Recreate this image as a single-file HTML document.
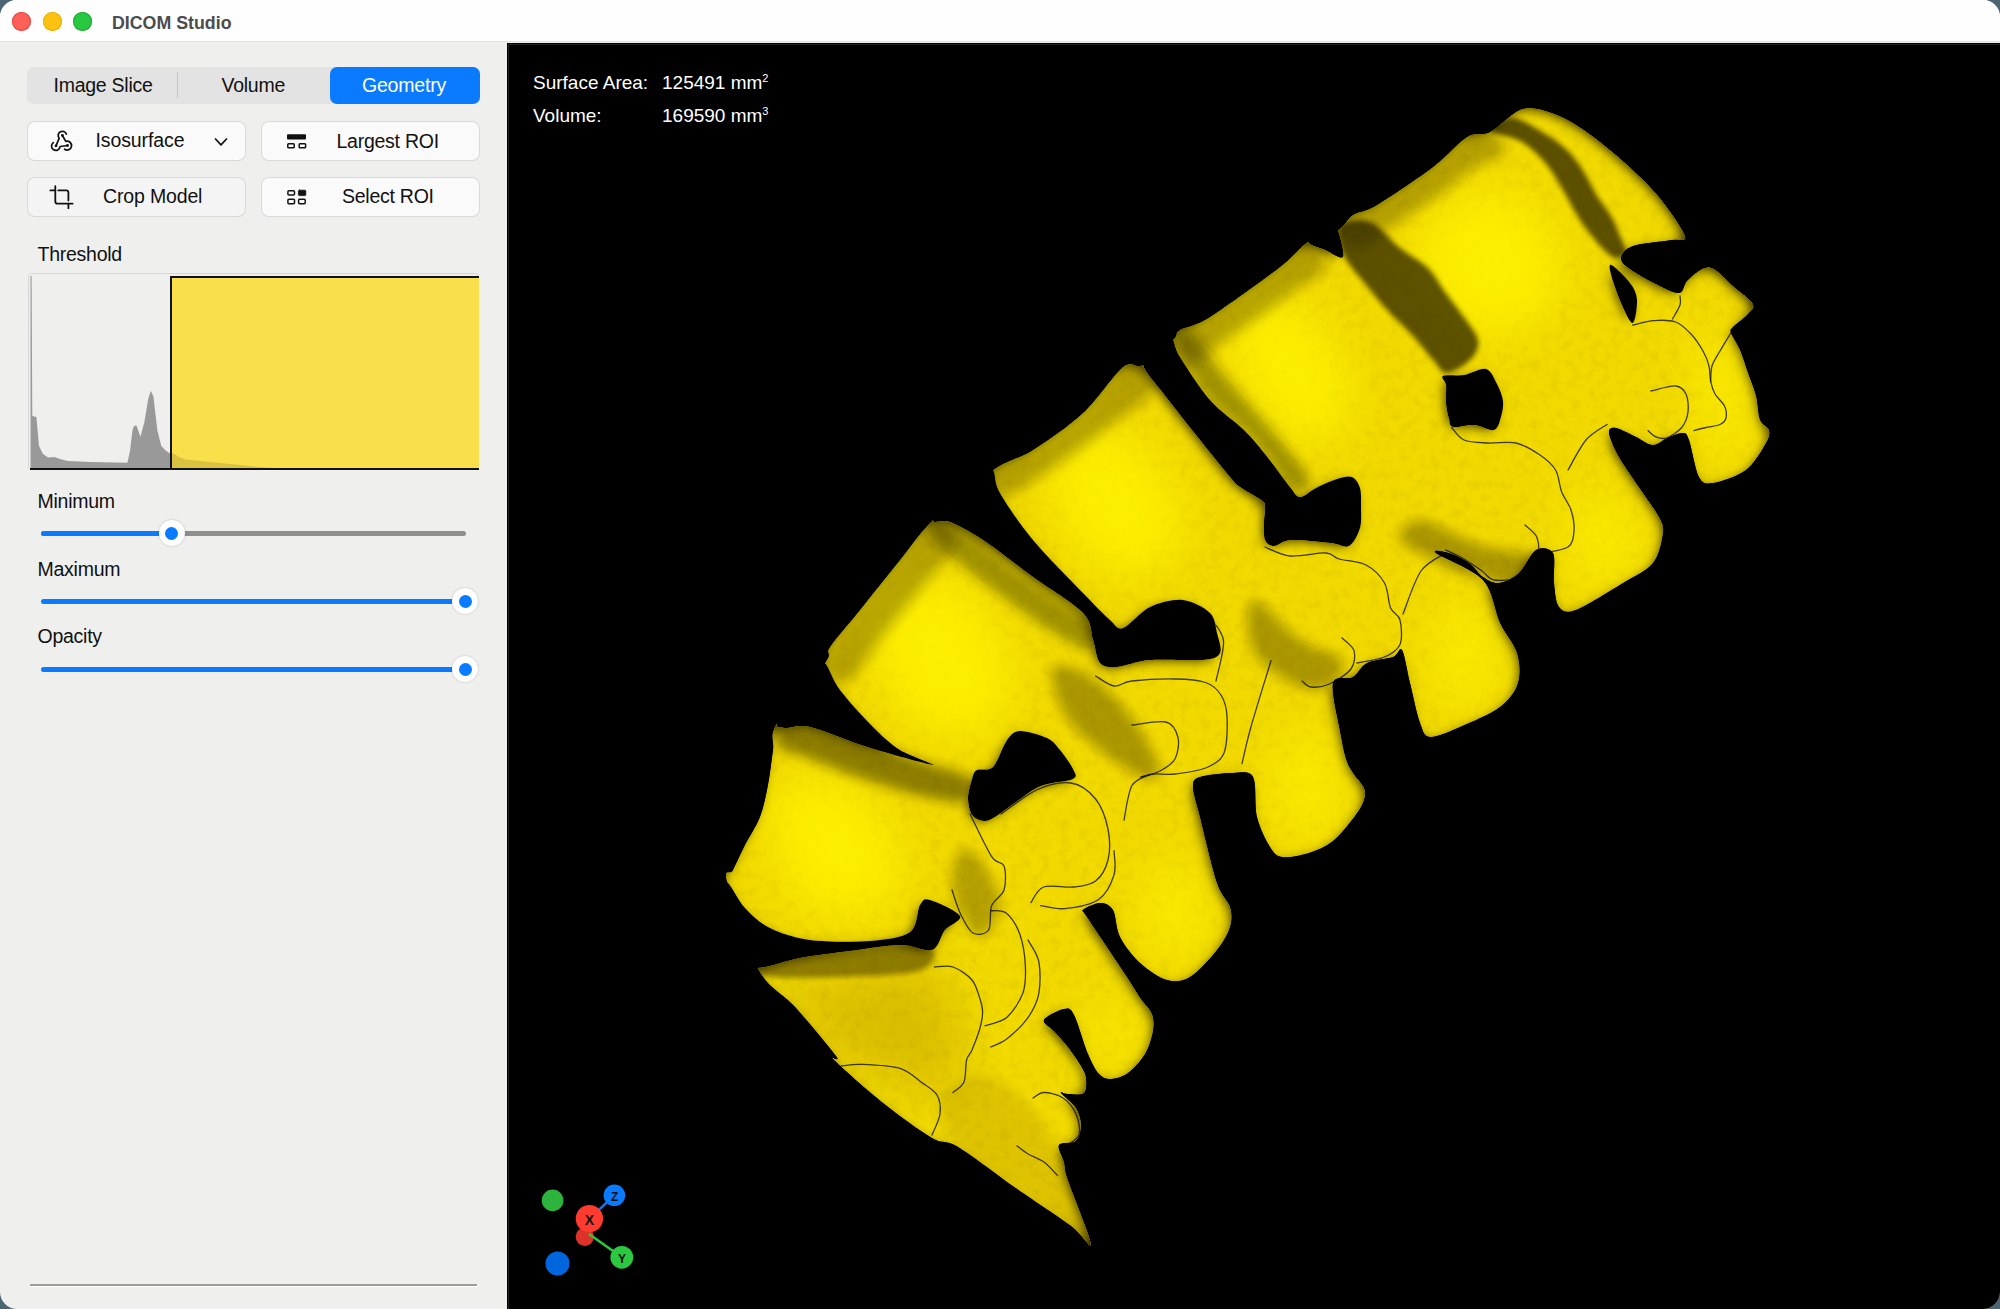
<!DOCTYPE html>
<html><head><meta charset="utf-8">
<style>
html,body{margin:0;padding:0;}
body{width:2000px;height:1309px;overflow:hidden;background:#4b6670;font-family:"Liberation Sans", sans-serif;position:relative;}
.win{position:absolute;left:0;top:0;width:2000px;height:1309px;border-radius:17px;overflow:hidden;background:#efefee;}
.tb{position:absolute;left:0;top:0;width:2000px;height:42px;background:#fefefe;border-bottom:1px solid #e2e2e2;box-sizing:border-box;}
.dot{position:absolute;top:12px;width:19px;height:19px;border-radius:50%;}
.t{position:absolute;white-space:nowrap;line-height:1;color:#111;}
.seg{position:absolute;left:27px;top:67px;width:453px;height:37px;border-radius:7px;background:#e3e3e3;}
.btn{position:absolute;width:217px;height:38px;border-radius:7px;background:#fafafa;box-shadow:0 0 0 1px #dadada, 0 1px 1px rgba(0,0,0,0.08);}
.vp{position:absolute;left:507px;top:43px;width:1493px;height:1266px;background:#000;}
</style></head><body>
<div class="win">
 <div class="tb">
  <div class="dot" style="left:12px;background:#fe5f57;box-shadow:inset 0 0 0 1px #e5483f"></div>
  <div class="dot" style="left:42.5px;background:#fdc20f;box-shadow:inset 0 0 0 1px #e8b00a"></div>
  <div class="dot" style="left:73px;background:#28c840;box-shadow:inset 0 0 0 1px #1fa934"></div>
  <div class="t" style="left:112px;top:15px;font-size:17.8px;font-weight:bold;color:#4c4c4c">DICOM Studio</div>
 </div>
 <div class="seg"></div>
 <div style="position:absolute;left:177px;top:72px;width:1px;height:26px;background:#c4c4c4"></div>
 <div style="position:absolute;left:329.5px;top:67px;width:150.5px;height:37px;border-radius:7px;background:#0a7aff"></div>
 <div class="t" style="left:53.5px;top:75.5px;font-size:19.5px;letter-spacing:-0.25px">Image Slice</div>
 <div class="t" style="left:221.5px;top:75.5px;font-size:19.5px;letter-spacing:-0.25px">Volume</div>
 <div class="t" style="left:362px;top:75.5px;font-size:19.5px;letter-spacing:-0.2px;color:#fff">Geometry</div>

 <div class="btn" style="left:27.5px;top:122px"></div>
 <div class="btn" style="left:262px;top:122px"></div>
 <div class="btn" style="left:27.5px;top:178px;background:#f4f4f4"></div>
 <div class="btn" style="left:262px;top:178px"></div>
 <div class="t" style="left:95.5px;top:131.3px;font-size:19.5px;letter-spacing:-0.1px">Isosurface</div>
 <div class="t" style="left:336.5px;top:131.6px;font-size:19.5px;letter-spacing:-0.25px">Largest ROI</div>
 <div class="t" style="left:103px;top:187.3px;font-size:19.5px;letter-spacing:-0.15px">Crop Model</div>
 <div class="t" style="left:342px;top:187.3px;font-size:19.5px;letter-spacing:-0.25px">Select ROI</div>


 <svg style="position:absolute;left:0;top:0" width="100" height="170" viewBox="0 0 100 170" fill="none" stroke="#111" stroke-width="1.75" stroke-linecap="round" stroke-linejoin="round">
  <path d="M66.35,134.06 A4.2,4.2 0 1 0 59.2,138.2 L56,145.8"/>
  <path d="M62.4,135.5 L65.8,141.4 A4.4,4.4 0 1 1 64.6,149.2"/>
  <path d="M53.3,142.6 A4.3,4.3 0 1 0 60.1,146.5 L67.5,145.5"/>
  <circle cx="62.4" cy="135.5" r="1.4" fill="#111" stroke="none"/><circle cx="56" cy="145.8" r="1.4" fill="#111" stroke="none"/><circle cx="67.5" cy="145.5" r="1.4" fill="#111" stroke="none"/>
 </svg>
 <svg style="position:absolute;left:0;top:0" width="500" height="230" viewBox="0 0 500 230" fill="none" stroke="#111" stroke-linecap="round" stroke-linejoin="round">
  <path d="M215.5 139 L221 144.8 L226.5 139" stroke-width="1.7"/>
  <rect x="287" y="134.3" width="19" height="5.2" rx="1" fill="#111" stroke="none"/>
  <rect x="287.8" y="143.8" width="6.4" height="4" rx="0.8" stroke-width="1.5"/>
  <rect x="299.2" y="143.8" width="6.4" height="4" rx="0.8" stroke-width="1.5"/>
  <rect x="287.9" y="190.7" width="6.6" height="4.4" rx="1" stroke-width="1.5"/>
  <rect x="298.4" y="190.2" width="7.4" height="5.4" rx="1" fill="#111" stroke-width="0.8"/>
  <rect x="287.9" y="199.3" width="6.6" height="4.4" rx="1" stroke-width="1.5"/>
  <rect x="298.6" y="199.3" width="6.6" height="4.4" rx="1" stroke-width="1.5"/>
  <path d="M55.3 186.2 V201.5 Q55.3 203.7 57.5 203.7 H72.6" stroke-width="1.8"/>
  <path d="M50.4 190.4 H55.3" stroke-width="1.8"/>
  <path d="M58.3 190.4 H66.3 Q68.4 190.4 68.4 192.5 V200.4" stroke-width="1.8"/>
  <path d="M68.4 203.7 V208.2" stroke-width="1.8"/>
 </svg>
 <div class="t" style="left:37.5px;top:244.5px;font-size:19.5px;letter-spacing:-0.25px">Threshold</div>
 <div class="t" style="left:37.5px;top:492px;font-size:19.5px;letter-spacing:-0.25px">Minimum</div>
 <div class="t" style="left:37.5px;top:559.8px;font-size:19.5px;letter-spacing:-0.25px">Maximum</div>
 <div class="t" style="left:37.5px;top:627px;font-size:19.5px;letter-spacing:-0.25px">Opacity</div>

 <div style="position:absolute;left:28px;top:273px;width:451px;height:197px;border:1px solid #d6d6d6;border-radius:4px;box-sizing:border-box;background:#efefee"></div>
 <div style="position:absolute;left:170px;top:276px;width:309px;height:193px;background:#f9df4a;border-left:2px solid #111;border-top:2px solid #111;box-sizing:border-box"></div>

 <svg style="position:absolute;left:0;top:0" width="500" height="480" viewBox="0 0 500 480">
  <path d="M30.5 469 L30.5 276 L31.6 276 L32.3 416 L36.4 417 L39 446 L43 454 L48 457.5 L54.6 457 L60 459 L67.6 461 L90 462 L127.4 462.7 L130 451 L132.5 430 L134 426 L136.5 425.5 L140.4 436.7 L144.3 422.4 L148.2 399 L150.8 390.7 L153.4 396.4 L157.3 430 L161.2 445.8 L165 450 L170 453.6 L170 469 Z" fill="#999"/>
  <path d="M172 469 L172 453 L176 455 L179 457 L186 459.5 L200 461 L230 464 L260 467 L290 469 Z" fill="#000" fill-opacity="0.13"/>
 </svg>
 <div style="position:absolute;left:30px;top:468px;width:449px;height:2px;background:#111"></div>

 <div style="position:absolute;left:41px;top:530.5px;width:425px;height:5px;border-radius:3px;background:#8e8e8e"></div>
 <div style="position:absolute;left:41px;top:530.5px;width:131px;height:5px;border-radius:3px;background:#0a7aff"></div>
 <div style="position:absolute;left:41px;top:598.5px;width:425px;height:5px;border-radius:3px;background:#0a7aff"></div>
 <div style="position:absolute;left:41px;top:666.5px;width:425px;height:5px;border-radius:3px;background:#0a7aff"></div>
 <div style="position:absolute;left:158.5px;top:520px;width:26px;height:26px;border-radius:50%;background:#fff;box-shadow:0 0 2px rgba(0,0,0,.25)"></div>
 <div style="position:absolute;left:165px;top:526.5px;width:13px;height:13px;border-radius:50%;background:#0a7aff"></div>
 <div style="position:absolute;left:452px;top:588px;width:26px;height:26px;border-radius:50%;background:#fff;box-shadow:0 0 2px rgba(0,0,0,.25)"></div>
 <div style="position:absolute;left:458.5px;top:594.5px;width:13px;height:13px;border-radius:50%;background:#0a7aff"></div>
 <div style="position:absolute;left:452px;top:656px;width:26px;height:26px;border-radius:50%;background:#fff;box-shadow:0 0 2px rgba(0,0,0,.25)"></div>
 <div style="position:absolute;left:458.5px;top:662.5px;width:13px;height:13px;border-radius:50%;background:#0a7aff"></div>

 <div style="position:absolute;left:30px;top:1284px;width:447px;height:2px;background:#9c9c9c;box-shadow:0 1px 0 #fff"></div>

 <div class="vp"><div style="position:absolute;left:1px;top:1px;right:0;bottom:0;border-left:1px solid #232323;border-top:1px solid #232323"></div></div>
 <svg style="position:absolute;left:0;top:0" width="2000" height="1309" viewBox="0 0 2000 1309">
<defs>
<mask id="hm" maskUnits="userSpaceOnUse" x="0" y="0" width="2000" height="1309"><rect x="0" y="0" width="2000" height="1309" fill="#000"/>
<path d="M1091.0,1244.0 C1091.5,1251.4 1082.8,1234.8 1071.0,1226.0 C1059.2,1217.2 1035.1,1201.6 1017.0,1189.0 C998.9,1176.4 971.6,1155.2 958.0,1147.0 C944.4,1138.8 944.0,1145.0 932.0,1138.0 C920.0,1131.0 898.7,1115.5 883.0,1103.0 C867.3,1090.5 841.5,1067.5 834.0,1060.0 C826.5,1052.5 842.2,1064.5 836.0,1056.0 C829.8,1047.5 807.5,1020.9 795.0,1007.0 C782.5,993.1 768.9,989.0 758.0,969.0 C747.1,949.0 731.0,897.8 727.0,882.0 C723.0,866.2 730.1,875.9 733.0,870.0 C735.9,864.1 740.7,853.5 745.0,845.0 C749.3,836.5 756.3,826.6 760.0,817.0 C763.7,807.4 765.9,795.7 768.0,785.0 C770.1,774.3 771.6,759.9 773.0,750.0 C774.4,740.1 768.7,736.9 777.0,723.0 C785.3,709.1 816.5,675.2 825.0,663.0 C833.5,650.8 824.4,655.5 830.0,647.0 C835.6,638.5 848.8,623.9 860.0,610.0 C871.2,596.1 888.3,574.4 900.0,560.0 C911.7,545.6 918.1,534.4 933.0,520.0 C947.9,505.6 977.0,481.2 993.0,470.0 C1009.0,458.8 1018.6,459.1 1033.0,450.0 C1047.4,440.9 1068.6,426.3 1083.0,413.0 C1097.4,399.7 1113.4,374.7 1123.0,367.0 C1132.6,359.3 1135.0,369.3 1143.0,365.0 C1151.0,360.7 1167.1,345.6 1173.0,340.0 C1178.9,334.4 1174.1,333.7 1180.0,330.0 C1185.9,326.3 1194.0,327.1 1210.0,317.0 C1226.0,306.9 1264.3,279.0 1280.0,267.0 C1295.7,255.0 1298.7,247.9 1308.0,242.0 C1317.3,236.1 1330.8,234.3 1338.0,230.0 C1345.2,225.7 1346.8,219.0 1353.0,215.0 C1359.2,211.0 1364.2,212.7 1377.0,205.0 C1389.8,197.3 1418.6,177.9 1433.0,167.0 C1447.4,156.1 1457.9,142.6 1467.0,137.0 C1476.1,131.4 1481.2,136.5 1490.0,132.0 C1498.8,127.5 1512.1,112.0 1522.0,109.0 C1531.9,106.0 1542.1,109.6 1552.0,113.0 C1561.9,116.4 1572.5,122.2 1584.0,130.0 C1595.5,137.8 1612.0,151.3 1624.0,162.0 C1636.0,172.7 1649.2,185.2 1659.0,197.0 C1668.8,208.8 1682.9,229.1 1685.0,236.0 C1687.1,242.9 1680.3,238.4 1672.0,240.0 C1663.7,241.6 1641.2,243.1 1633.0,246.0 C1624.8,248.9 1621.5,254.3 1621.0,258.0 C1620.5,261.7 1624.4,264.8 1630.0,269.0 C1635.6,273.2 1648.2,280.2 1656.0,284.0 C1663.8,287.8 1674.0,293.5 1679.0,293.0 C1684.0,292.5 1683.3,284.8 1687.0,281.0 C1690.7,277.2 1697.7,270.9 1702.0,269.0 C1706.3,267.1 1709.0,266.3 1714.0,269.0 C1719.0,271.7 1726.8,280.4 1733.0,286.0 C1739.2,291.6 1750.8,299.4 1753.0,304.0 C1755.2,308.6 1750.2,311.3 1747.0,315.0 C1743.8,318.7 1735.6,324.1 1733.0,327.0 C1730.4,329.9 1729.9,329.3 1731.0,333.0 C1732.1,336.7 1737.3,343.6 1740.0,350.0 C1742.7,356.4 1745.4,365.6 1748.0,373.0 C1750.6,380.4 1754.1,388.5 1756.0,396.0 C1757.9,403.5 1757.9,414.6 1760.0,420.0 C1762.1,425.4 1768.0,426.3 1769.0,430.0 C1770.0,433.7 1769.7,436.6 1766.0,443.0 C1762.3,449.4 1754.5,463.6 1746.0,470.0 C1737.5,476.4 1720.5,481.9 1713.0,483.0 C1705.5,484.1 1702.8,483.9 1699.0,477.0 C1695.2,470.1 1691.6,447.0 1689.0,440.0 C1686.4,433.0 1686.2,433.5 1683.0,433.0 C1679.8,432.5 1673.8,435.1 1669.0,437.0 C1664.2,438.9 1658.3,445.0 1653.0,445.0 C1647.7,445.0 1641.9,439.7 1636.0,437.0 C1630.1,434.3 1620.3,428.6 1616.0,428.0 C1611.7,427.4 1608.5,428.4 1609.0,433.0 C1609.5,437.6 1613.6,447.4 1619.0,457.0 C1624.4,466.6 1636.6,483.4 1643.0,493.0 C1649.4,502.6 1655.8,510.6 1659.0,517.0 C1662.2,523.4 1664.0,525.6 1663.0,533.0 C1662.0,540.4 1659.4,555.0 1653.0,563.0 C1646.6,571.0 1635.3,575.5 1623.0,583.0 C1610.7,590.5 1586.2,606.2 1576.0,610.0 C1565.8,613.8 1562.5,611.3 1559.0,607.0 C1555.5,602.7 1555.0,591.6 1554.0,583.0 C1553.0,574.4 1555.9,558.3 1553.0,553.0 C1550.1,547.7 1541.4,546.8 1536.0,550.0 C1530.6,553.2 1524.9,567.7 1519.0,573.0 C1513.1,578.3 1504.8,582.4 1499.0,583.0 C1493.2,583.6 1487.8,580.2 1483.0,577.0 C1478.2,573.8 1474.4,566.8 1469.0,563.0 C1463.6,559.2 1454.3,554.6 1449.0,553.0 C1443.7,551.4 1430.6,548.7 1436.0,553.0 C1441.4,557.3 1472.8,568.8 1483.0,580.0 C1493.2,591.2 1494.6,611.3 1500.0,623.0 C1505.4,634.7 1514.1,643.4 1517.0,653.0 C1519.9,662.6 1520.7,674.4 1518.0,683.0 C1515.3,691.6 1509.3,700.0 1500.0,707.0 C1490.7,714.0 1471.2,722.2 1460.0,727.0 C1448.8,731.8 1436.4,737.6 1430.0,737.0 C1423.6,736.4 1423.2,731.6 1420.0,723.0 C1416.8,714.4 1412.9,694.7 1410.0,683.0 C1407.1,671.3 1404.7,654.2 1402.0,650.0 C1399.3,645.8 1398.6,654.9 1393.0,657.0 C1387.4,659.1 1373.4,659.8 1367.0,663.0 C1360.6,666.2 1358.4,673.8 1353.0,677.0 C1347.6,680.2 1335.1,674.4 1333.0,683.0 C1330.9,691.6 1337.9,718.8 1340.0,731.0 C1342.1,743.2 1343.9,752.3 1346.0,759.0 C1348.1,765.7 1350.1,768.4 1353.0,773.0 C1355.9,777.6 1362.2,783.7 1364.0,788.0 C1365.8,792.3 1365.4,795.5 1364.0,800.0 C1362.6,804.5 1360.0,809.4 1355.0,816.0 C1350.0,822.6 1340.4,835.1 1333.0,841.0 C1325.6,846.9 1317.2,850.4 1309.0,853.0 C1300.8,855.6 1288.2,858.0 1282.0,857.0 C1275.8,856.0 1274.0,853.4 1270.0,847.0 C1266.0,840.6 1259.7,828.2 1257.0,817.0 C1254.3,805.8 1256.8,784.0 1253.0,777.0 C1249.2,770.0 1241.5,773.0 1233.0,773.0 C1224.5,773.0 1206.4,774.8 1200.0,777.0 C1193.6,779.2 1193.0,780.6 1193.0,787.0 C1193.0,793.4 1196.2,801.6 1200.0,817.0 C1203.8,832.4 1212.2,868.6 1217.0,883.0 C1221.8,897.4 1227.9,900.0 1230.0,907.0 C1232.1,914.0 1232.1,920.1 1230.0,927.0 C1227.9,933.9 1223.4,942.0 1217.0,950.0 C1210.6,958.0 1198.0,972.2 1190.0,977.0 C1182.0,981.8 1175.0,982.2 1167.0,980.0 C1159.0,977.8 1147.5,969.9 1140.0,963.0 C1132.5,956.1 1124.3,945.5 1120.0,937.0 C1115.7,928.5 1116.2,915.4 1113.0,910.0 C1109.8,904.6 1104.8,903.0 1100.0,903.0 C1095.2,903.0 1085.1,907.8 1083.0,910.0 C1080.9,912.2 1080.0,906.3 1087.0,917.0 C1094.0,927.7 1118.4,963.9 1127.0,977.0 C1135.6,990.1 1137.0,993.1 1141.0,999.0 C1145.0,1004.9 1150.1,1008.9 1152.0,1014.0 C1153.9,1019.1 1154.1,1024.6 1153.0,1031.0 C1151.9,1037.4 1149.0,1047.3 1145.0,1054.0 C1141.0,1060.7 1133.4,1069.0 1128.0,1073.0 C1122.6,1077.0 1115.6,1078.8 1111.0,1079.0 C1106.4,1079.2 1102.7,1078.0 1099.0,1074.0 C1095.3,1070.0 1092.0,1063.4 1088.0,1054.0 C1084.0,1044.6 1077.8,1022.2 1074.0,1015.0 C1070.2,1007.8 1068.8,1008.2 1064.0,1009.0 C1059.2,1009.8 1045.6,1016.5 1044.0,1020.0 C1042.4,1023.5 1050.2,1026.7 1054.0,1031.0 C1057.8,1035.3 1063.7,1041.4 1068.0,1047.0 C1072.3,1052.6 1078.1,1061.0 1081.0,1066.0 C1083.9,1071.0 1085.5,1073.7 1086.0,1078.0 C1086.5,1082.3 1086.9,1090.4 1084.0,1093.0 C1081.1,1095.6 1071.7,1094.0 1068.0,1094.0 C1064.3,1094.0 1059.7,1090.8 1061.0,1093.0 C1062.3,1095.2 1072.8,1102.9 1076.0,1108.0 C1079.2,1113.1 1081.0,1119.7 1081.0,1125.0 C1081.0,1130.3 1079.5,1137.8 1076.0,1141.0 C1072.5,1144.2 1060.9,1141.6 1059.0,1145.0 C1057.1,1148.4 1062.6,1156.4 1064.0,1162.0 C1065.4,1167.6 1063.7,1166.9 1068.0,1180.0 C1072.3,1193.1 1090.5,1236.6 1091.0,1244.0 Z" fill="#fff"/>
<path d="M727.0,882.0 C732.3,886.5 738.1,900.6 745.0,908.0 C751.9,915.4 759.6,922.9 770.0,928.0 C780.4,933.1 794.0,937.9 810.0,940.0 C826.0,942.1 854.0,942.3 870.0,941.0 C886.0,939.7 902.0,937.8 910.0,932.0 C918.0,926.2 916.8,910.1 920.0,905.0 C923.2,899.9 923.6,898.2 930.0,900.0 C936.4,901.8 957.6,911.2 960.0,916.0 C962.4,920.8 949.5,924.6 945.0,930.0 C940.5,935.4 939.2,947.6 932.0,950.0 C924.8,952.4 913.1,944.8 900.0,945.0 C886.9,945.2 866.0,948.9 850.0,951.0 C834.0,953.1 814.9,955.3 800.0,958.0 C785.1,960.7 769.0,967.7 757.0,968.0 C745.0,968.3 733.3,968.5 725.0,960.0 C716.7,951.5 707.1,927.8 705.0,915.0 C702.9,902.2 708.5,885.3 712.0,880.0 C715.5,874.7 721.7,877.5 727.0,882.0 Z" fill="#000"/>
<path d="M777.0,723.0 C777.8,716.9 784.4,700.1 790.0,690.0 C795.6,679.9 806.4,664.3 812.0,660.0 C817.6,655.7 820.5,658.2 825.0,663.0 C829.5,667.8 832.3,679.8 840.0,690.0 C847.7,700.2 863.4,717.4 873.0,727.0 C882.6,736.6 890.4,743.9 900.0,750.0 C909.6,756.1 938.3,765.5 933.0,765.0 C927.7,764.5 886.7,753.1 867.0,747.0 C847.3,740.9 823.1,730.0 810.0,727.0 C796.9,724.0 790.3,728.6 785.0,728.0 C779.7,727.4 776.2,729.1 777.0,723.0 Z" fill="#000"/>
<path d="M977.0,770.0 C980.4,768.1 988.2,771.8 993.0,767.0 C997.8,762.2 1002.7,745.8 1007.0,740.0 C1011.3,734.2 1013.6,731.3 1020.0,731.0 C1026.4,730.7 1040.6,735.0 1047.0,738.0 C1053.4,741.0 1055.8,745.0 1060.0,750.0 C1064.2,755.0 1070.9,764.4 1073.0,769.0 C1075.1,773.6 1078.1,776.3 1073.0,779.0 C1067.9,781.7 1050.1,782.3 1041.0,786.0 C1031.9,789.7 1023.4,797.0 1016.0,802.0 C1008.6,807.0 1000.1,814.0 995.0,817.0 C989.9,820.0 987.7,821.3 984.0,821.0 C980.3,820.7 974.6,818.7 972.0,815.0 C969.4,811.3 968.0,803.8 968.0,798.0 C968.0,792.2 970.6,783.5 972.0,779.0 C973.4,774.5 973.6,771.9 977.0,770.0 Z" fill="#000"/>
<path d="M933.0,520.0 C933.0,514.9 942.5,498.6 950.0,490.0 C957.5,481.4 973.1,469.2 980.0,466.0 C986.9,462.8 989.8,465.7 993.0,470.0 C996.2,474.3 993.6,481.8 1000.0,493.0 C1006.4,504.2 1019.7,524.0 1033.0,540.0 C1046.3,556.0 1070.7,580.2 1083.0,593.0 C1095.3,605.8 1103.6,614.4 1110.0,620.0 C1116.4,625.6 1116.6,630.1 1123.0,628.0 C1129.4,625.9 1140.4,611.5 1150.0,607.0 C1159.6,602.5 1173.4,599.0 1183.0,600.0 C1192.6,601.0 1204.6,607.7 1210.0,613.0 C1215.4,618.3 1215.4,626.6 1217.0,633.0 C1218.6,639.4 1222.2,648.7 1220.0,653.0 C1217.8,657.3 1214.2,658.9 1203.0,660.0 C1191.8,661.1 1163.8,658.9 1150.0,660.0 C1136.2,661.1 1125.0,666.5 1117.0,667.0 C1109.0,667.5 1103.8,667.3 1100.0,663.0 C1096.2,658.7 1095.7,648.0 1093.0,640.0 C1090.3,632.0 1092.6,623.1 1083.0,613.0 C1073.4,602.9 1049.0,588.7 1033.0,577.0 C1017.0,565.3 996.3,548.8 983.0,540.0 C969.7,531.2 958.0,525.2 950.0,522.0 C942.0,518.8 933.0,525.1 933.0,520.0 Z" fill="#000"/>
<path d="M1143.0,365.0 C1140.9,357.3 1146.5,349.8 1150.0,345.0 C1153.5,340.2 1161.3,335.8 1165.0,335.0 C1168.7,334.2 1170.6,336.5 1173.0,340.0 C1175.4,343.5 1174.1,347.4 1180.0,357.0 C1185.9,366.6 1199.8,388.3 1210.0,400.0 C1220.2,411.7 1235.2,421.4 1244.0,430.0 C1252.8,438.6 1257.6,444.9 1265.0,454.0 C1272.4,463.1 1284.4,480.1 1290.0,487.0 C1295.6,493.9 1295.8,496.8 1300.0,497.0 C1304.2,497.2 1310.1,490.9 1316.0,488.0 C1321.9,485.1 1331.2,480.8 1337.0,479.0 C1342.8,477.2 1348.3,475.6 1352.0,477.0 C1355.7,478.4 1358.6,483.4 1360.0,488.0 C1361.4,492.6 1361.0,499.6 1361.0,506.0 C1361.0,512.4 1361.9,521.6 1360.0,528.0 C1358.1,534.4 1353.6,543.6 1349.0,546.0 C1344.4,548.4 1340.3,544.0 1331.0,543.0 C1321.7,542.0 1300.1,539.5 1291.0,540.0 C1281.9,540.5 1278.2,546.0 1274.0,546.0 C1269.8,546.0 1266.6,543.8 1265.0,540.0 C1263.4,536.2 1264.0,527.4 1264.0,522.0 C1264.0,516.6 1265.5,509.5 1265.0,506.0 C1264.5,502.5 1265.0,503.0 1261.0,500.0 C1257.0,497.0 1245.0,490.7 1240.0,487.0 C1235.0,483.3 1236.4,484.5 1230.0,477.0 C1223.6,469.5 1210.7,453.4 1200.0,440.0 C1189.3,426.6 1172.1,405.0 1163.0,393.0 C1153.9,381.0 1145.1,372.7 1143.0,365.0 Z" fill="#000"/>
<path d="M1308.0,242.0 C1306.4,238.5 1311.2,231.2 1315.0,228.0 C1318.8,224.8 1328.3,221.7 1332.0,222.0 C1335.7,222.3 1336.2,224.4 1338.0,230.0 C1339.8,235.6 1345.1,253.8 1343.0,257.0 C1340.9,260.2 1330.6,252.4 1325.0,250.0 C1319.4,247.6 1309.6,245.5 1308.0,242.0 Z" fill="#000"/>
<path d="M1443.0,376.0 C1445.9,374.4 1457.1,376.1 1464.0,375.0 C1470.9,373.9 1480.7,367.6 1486.0,369.0 C1491.3,370.4 1494.3,378.9 1497.0,384.0 C1499.7,389.1 1502.4,395.7 1503.0,401.0 C1503.6,406.3 1502.4,412.4 1501.0,417.0 C1499.6,421.6 1498.3,428.7 1494.0,430.0 C1489.7,431.3 1480.6,425.5 1474.0,425.0 C1467.4,424.5 1457.0,428.0 1453.0,427.0 C1449.0,426.0 1450.1,422.7 1449.0,419.0 C1447.9,415.3 1446.5,409.4 1446.0,404.0 C1445.5,398.6 1446.5,389.5 1446.0,385.0 C1445.5,380.5 1440.1,377.6 1443.0,376.0 Z" fill="#000"/>
<path d="M1610.0,265.0 C1612.1,263.4 1625.7,277.4 1630.0,283.0 C1634.3,288.6 1636.7,293.6 1637.0,300.0 C1637.3,306.4 1635.2,324.1 1632.0,323.0 C1628.8,321.9 1620.5,302.3 1617.0,293.0 C1613.5,283.7 1607.9,266.6 1610.0,265.0 Z" fill="#000"/>
</mask>
<filter id="rim" filterUnits="userSpaceOnUse" x="600" y="60" width="1300" height="1240">
  <feGaussianBlur in="SourceAlpha" stdDeviation="8" result="b0"/>
  <feOffset in="b0" dx="-3" dy="3" result="b"/>
  <feComponentTransfer in="b" result="inv"><feFuncA type="table" tableValues="1 1 0.9 0.8 0.65 0.5 0.35 0.2 0.1 0.03 0"/></feComponentTransfer>
  <feFlood flood-color="#1e1600" result="c"/>
  <feComposite in="c" in2="inv" operator="in" result="sh"/>
  <feComposite in="sh" in2="SourceAlpha" operator="in" result="inner"/>
  <feMerge><feMergeNode in="SourceGraphic"/><feMergeNode in="inner"/></feMerge>
</filter>
<filter id="bl" x="-20%" y="-20%" width="140%" height="140%"><feGaussianBlur stdDeviation="6"/></filter>
<filter id="bl3" x="-50%" y="-50%" width="200%" height="200%"><feGaussianBlur stdDeviation="22"/></filter>
<filter id="tex" filterUnits="userSpaceOnUse" x="700" y="100" width="1100" height="1160"><feTurbulence type="fractalNoise" baseFrequency="0.1" numOctaves="3" seed="7" result="n"/><feColorMatrix in="n" type="matrix" values="0 0 0 0 0.16  0 0 0 0 0.12  0 0 0 0 0  0 0 0 -2.2 1.25"/></filter>
<filter id="bl2" x="-20%" y="-20%" width="140%" height="140%"><feGaussianBlur stdDeviation="2.5"/></filter>
</defs>
<g filter="url(#rim)"><g mask="url(#hm)">
<path d="M1091.0,1244.0 C1091.5,1251.4 1082.8,1234.8 1071.0,1226.0 C1059.2,1217.2 1035.1,1201.6 1017.0,1189.0 C998.9,1176.4 971.6,1155.2 958.0,1147.0 C944.4,1138.8 944.0,1145.0 932.0,1138.0 C920.0,1131.0 898.7,1115.5 883.0,1103.0 C867.3,1090.5 841.5,1067.5 834.0,1060.0 C826.5,1052.5 842.2,1064.5 836.0,1056.0 C829.8,1047.5 807.5,1020.9 795.0,1007.0 C782.5,993.1 768.9,989.0 758.0,969.0 C747.1,949.0 731.0,897.8 727.0,882.0 C723.0,866.2 730.1,875.9 733.0,870.0 C735.9,864.1 740.7,853.5 745.0,845.0 C749.3,836.5 756.3,826.6 760.0,817.0 C763.7,807.4 765.9,795.7 768.0,785.0 C770.1,774.3 771.6,759.9 773.0,750.0 C774.4,740.1 768.7,736.9 777.0,723.0 C785.3,709.1 816.5,675.2 825.0,663.0 C833.5,650.8 824.4,655.5 830.0,647.0 C835.6,638.5 848.8,623.9 860.0,610.0 C871.2,596.1 888.3,574.4 900.0,560.0 C911.7,545.6 918.1,534.4 933.0,520.0 C947.9,505.6 977.0,481.2 993.0,470.0 C1009.0,458.8 1018.6,459.1 1033.0,450.0 C1047.4,440.9 1068.6,426.3 1083.0,413.0 C1097.4,399.7 1113.4,374.7 1123.0,367.0 C1132.6,359.3 1135.0,369.3 1143.0,365.0 C1151.0,360.7 1167.1,345.6 1173.0,340.0 C1178.9,334.4 1174.1,333.7 1180.0,330.0 C1185.9,326.3 1194.0,327.1 1210.0,317.0 C1226.0,306.9 1264.3,279.0 1280.0,267.0 C1295.7,255.0 1298.7,247.9 1308.0,242.0 C1317.3,236.1 1330.8,234.3 1338.0,230.0 C1345.2,225.7 1346.8,219.0 1353.0,215.0 C1359.2,211.0 1364.2,212.7 1377.0,205.0 C1389.8,197.3 1418.6,177.9 1433.0,167.0 C1447.4,156.1 1457.9,142.6 1467.0,137.0 C1476.1,131.4 1481.2,136.5 1490.0,132.0 C1498.8,127.5 1512.1,112.0 1522.0,109.0 C1531.9,106.0 1542.1,109.6 1552.0,113.0 C1561.9,116.4 1572.5,122.2 1584.0,130.0 C1595.5,137.8 1612.0,151.3 1624.0,162.0 C1636.0,172.7 1649.2,185.2 1659.0,197.0 C1668.8,208.8 1682.9,229.1 1685.0,236.0 C1687.1,242.9 1680.3,238.4 1672.0,240.0 C1663.7,241.6 1641.2,243.1 1633.0,246.0 C1624.8,248.9 1621.5,254.3 1621.0,258.0 C1620.5,261.7 1624.4,264.8 1630.0,269.0 C1635.6,273.2 1648.2,280.2 1656.0,284.0 C1663.8,287.8 1674.0,293.5 1679.0,293.0 C1684.0,292.5 1683.3,284.8 1687.0,281.0 C1690.7,277.2 1697.7,270.9 1702.0,269.0 C1706.3,267.1 1709.0,266.3 1714.0,269.0 C1719.0,271.7 1726.8,280.4 1733.0,286.0 C1739.2,291.6 1750.8,299.4 1753.0,304.0 C1755.2,308.6 1750.2,311.3 1747.0,315.0 C1743.8,318.7 1735.6,324.1 1733.0,327.0 C1730.4,329.9 1729.9,329.3 1731.0,333.0 C1732.1,336.7 1737.3,343.6 1740.0,350.0 C1742.7,356.4 1745.4,365.6 1748.0,373.0 C1750.6,380.4 1754.1,388.5 1756.0,396.0 C1757.9,403.5 1757.9,414.6 1760.0,420.0 C1762.1,425.4 1768.0,426.3 1769.0,430.0 C1770.0,433.7 1769.7,436.6 1766.0,443.0 C1762.3,449.4 1754.5,463.6 1746.0,470.0 C1737.5,476.4 1720.5,481.9 1713.0,483.0 C1705.5,484.1 1702.8,483.9 1699.0,477.0 C1695.2,470.1 1691.6,447.0 1689.0,440.0 C1686.4,433.0 1686.2,433.5 1683.0,433.0 C1679.8,432.5 1673.8,435.1 1669.0,437.0 C1664.2,438.9 1658.3,445.0 1653.0,445.0 C1647.7,445.0 1641.9,439.7 1636.0,437.0 C1630.1,434.3 1620.3,428.6 1616.0,428.0 C1611.7,427.4 1608.5,428.4 1609.0,433.0 C1609.5,437.6 1613.6,447.4 1619.0,457.0 C1624.4,466.6 1636.6,483.4 1643.0,493.0 C1649.4,502.6 1655.8,510.6 1659.0,517.0 C1662.2,523.4 1664.0,525.6 1663.0,533.0 C1662.0,540.4 1659.4,555.0 1653.0,563.0 C1646.6,571.0 1635.3,575.5 1623.0,583.0 C1610.7,590.5 1586.2,606.2 1576.0,610.0 C1565.8,613.8 1562.5,611.3 1559.0,607.0 C1555.5,602.7 1555.0,591.6 1554.0,583.0 C1553.0,574.4 1555.9,558.3 1553.0,553.0 C1550.1,547.7 1541.4,546.8 1536.0,550.0 C1530.6,553.2 1524.9,567.7 1519.0,573.0 C1513.1,578.3 1504.8,582.4 1499.0,583.0 C1493.2,583.6 1487.8,580.2 1483.0,577.0 C1478.2,573.8 1474.4,566.8 1469.0,563.0 C1463.6,559.2 1454.3,554.6 1449.0,553.0 C1443.7,551.4 1430.6,548.7 1436.0,553.0 C1441.4,557.3 1472.8,568.8 1483.0,580.0 C1493.2,591.2 1494.6,611.3 1500.0,623.0 C1505.4,634.7 1514.1,643.4 1517.0,653.0 C1519.9,662.6 1520.7,674.4 1518.0,683.0 C1515.3,691.6 1509.3,700.0 1500.0,707.0 C1490.7,714.0 1471.2,722.2 1460.0,727.0 C1448.8,731.8 1436.4,737.6 1430.0,737.0 C1423.6,736.4 1423.2,731.6 1420.0,723.0 C1416.8,714.4 1412.9,694.7 1410.0,683.0 C1407.1,671.3 1404.7,654.2 1402.0,650.0 C1399.3,645.8 1398.6,654.9 1393.0,657.0 C1387.4,659.1 1373.4,659.8 1367.0,663.0 C1360.6,666.2 1358.4,673.8 1353.0,677.0 C1347.6,680.2 1335.1,674.4 1333.0,683.0 C1330.9,691.6 1337.9,718.8 1340.0,731.0 C1342.1,743.2 1343.9,752.3 1346.0,759.0 C1348.1,765.7 1350.1,768.4 1353.0,773.0 C1355.9,777.6 1362.2,783.7 1364.0,788.0 C1365.8,792.3 1365.4,795.5 1364.0,800.0 C1362.6,804.5 1360.0,809.4 1355.0,816.0 C1350.0,822.6 1340.4,835.1 1333.0,841.0 C1325.6,846.9 1317.2,850.4 1309.0,853.0 C1300.8,855.6 1288.2,858.0 1282.0,857.0 C1275.8,856.0 1274.0,853.4 1270.0,847.0 C1266.0,840.6 1259.7,828.2 1257.0,817.0 C1254.3,805.8 1256.8,784.0 1253.0,777.0 C1249.2,770.0 1241.5,773.0 1233.0,773.0 C1224.5,773.0 1206.4,774.8 1200.0,777.0 C1193.6,779.2 1193.0,780.6 1193.0,787.0 C1193.0,793.4 1196.2,801.6 1200.0,817.0 C1203.8,832.4 1212.2,868.6 1217.0,883.0 C1221.8,897.4 1227.9,900.0 1230.0,907.0 C1232.1,914.0 1232.1,920.1 1230.0,927.0 C1227.9,933.9 1223.4,942.0 1217.0,950.0 C1210.6,958.0 1198.0,972.2 1190.0,977.0 C1182.0,981.8 1175.0,982.2 1167.0,980.0 C1159.0,977.8 1147.5,969.9 1140.0,963.0 C1132.5,956.1 1124.3,945.5 1120.0,937.0 C1115.7,928.5 1116.2,915.4 1113.0,910.0 C1109.8,904.6 1104.8,903.0 1100.0,903.0 C1095.2,903.0 1085.1,907.8 1083.0,910.0 C1080.9,912.2 1080.0,906.3 1087.0,917.0 C1094.0,927.7 1118.4,963.9 1127.0,977.0 C1135.6,990.1 1137.0,993.1 1141.0,999.0 C1145.0,1004.9 1150.1,1008.9 1152.0,1014.0 C1153.9,1019.1 1154.1,1024.6 1153.0,1031.0 C1151.9,1037.4 1149.0,1047.3 1145.0,1054.0 C1141.0,1060.7 1133.4,1069.0 1128.0,1073.0 C1122.6,1077.0 1115.6,1078.8 1111.0,1079.0 C1106.4,1079.2 1102.7,1078.0 1099.0,1074.0 C1095.3,1070.0 1092.0,1063.4 1088.0,1054.0 C1084.0,1044.6 1077.8,1022.2 1074.0,1015.0 C1070.2,1007.8 1068.8,1008.2 1064.0,1009.0 C1059.2,1009.8 1045.6,1016.5 1044.0,1020.0 C1042.4,1023.5 1050.2,1026.7 1054.0,1031.0 C1057.8,1035.3 1063.7,1041.4 1068.0,1047.0 C1072.3,1052.6 1078.1,1061.0 1081.0,1066.0 C1083.9,1071.0 1085.5,1073.7 1086.0,1078.0 C1086.5,1082.3 1086.9,1090.4 1084.0,1093.0 C1081.1,1095.6 1071.7,1094.0 1068.0,1094.0 C1064.3,1094.0 1059.7,1090.8 1061.0,1093.0 C1062.3,1095.2 1072.8,1102.9 1076.0,1108.0 C1079.2,1113.1 1081.0,1119.7 1081.0,1125.0 C1081.0,1130.3 1079.5,1137.8 1076.0,1141.0 C1072.5,1144.2 1060.9,1141.6 1059.0,1145.0 C1057.1,1148.4 1062.6,1156.4 1064.0,1162.0 C1065.4,1167.6 1063.7,1166.9 1068.0,1180.0 C1072.3,1193.1 1090.5,1236.6 1091.0,1244.0 Z" fill="#f2da00"/>
</g></g>
<g mask="url(#hm)">
<rect x="700" y="100" width="1100" height="1160" filter="url(#tex)" opacity="0.08"/>
<path d="M1420.0,230.0 C1431.2,214.0 1477.6,186.8 1500.0,190.0 C1522.4,193.2 1553.6,229.2 1560.0,250.0 C1566.4,270.8 1554.4,307.2 1540.0,320.0 C1525.6,332.8 1487.6,334.8 1470.0,330.0 C1452.4,325.2 1438.0,306.0 1430.0,290.0 C1422.0,274.0 1408.8,246.0 1420.0,230.0 Z" fill="#fff400" fill-opacity="0.8" filter="url(#bl3)"/>
<path d="M1230.0,330.0 C1233.2,310.8 1270.8,292.0 1290.0,300.0 C1309.2,308.0 1343.6,357.6 1350.0,380.0 C1356.4,402.4 1342.8,433.6 1330.0,440.0 C1317.2,446.4 1286.0,437.6 1270.0,420.0 C1254.0,402.4 1226.8,349.2 1230.0,330.0 Z" fill="#fff400" fill-opacity="0.8" filter="url(#bl3)"/>
<path d="M1050.0,470.0 C1054.8,449.2 1099.2,423.6 1120.0,430.0 C1140.8,436.4 1173.6,487.6 1180.0,510.0 C1186.4,532.4 1174.4,562.0 1160.0,570.0 C1145.6,578.0 1107.6,576.0 1090.0,560.0 C1072.4,544.0 1045.2,490.8 1050.0,470.0 Z" fill="#fff400" fill-opacity="0.8" filter="url(#bl3)"/>
<path d="M870.0,620.0 C876.4,597.6 927.6,573.6 950.0,580.0 C972.4,586.4 1003.6,636.0 1010.0,660.0 C1016.4,684.0 1006.0,720.4 990.0,730.0 C974.0,739.6 929.2,737.6 910.0,720.0 C890.8,702.4 863.6,642.4 870.0,620.0 Z" fill="#fff400" fill-opacity="0.8" filter="url(#bl3)"/>
<path d="M770.0,800.0 C776.4,780.8 819.2,772.0 840.0,780.0 C860.8,788.0 893.6,829.2 900.0,850.0 C906.4,870.8 896.0,902.0 880.0,910.0 C864.0,918.0 817.6,917.6 800.0,900.0 C782.4,882.4 763.6,819.2 770.0,800.0 Z" fill="#fff400" fill-opacity="0.8" filter="url(#bl3)"/>
<path d="M1700.0,330.0 C1706.4,320.4 1732.0,342.4 1740.0,360.0 C1748.0,377.6 1753.2,424.0 1750.0,440.0 C1746.8,456.0 1728.0,463.2 1720.0,460.0 C1712.0,456.8 1703.2,440.8 1700.0,420.0 C1696.8,399.2 1693.6,339.6 1700.0,330.0 Z" fill="#fff400" fill-opacity="0.6" filter="url(#bl3)"/>
<path d="M1580.0,490.0 C1589.6,483.6 1620.4,498.8 1630.0,510.0 C1639.6,521.2 1646.4,547.2 1640.0,560.0 C1633.6,572.8 1601.2,591.6 1590.0,590.0 C1578.8,588.4 1571.6,566.0 1570.0,550.0 C1568.4,534.0 1570.4,496.4 1580.0,490.0 Z" fill="#fff400" fill-opacity="0.6" filter="url(#bl3)"/>
<path d="M1450.0,600.0 C1459.6,593.6 1482.0,605.6 1490.0,620.0 C1498.0,634.4 1506.4,675.6 1500.0,690.0 C1493.6,704.4 1461.2,714.8 1450.0,710.0 C1438.8,705.2 1430.0,677.6 1430.0,660.0 C1430.0,642.4 1440.4,606.4 1450.0,600.0 Z" fill="#fff400" fill-opacity="0.6" filter="url(#bl3)"/>
<path d="M1290.0,730.0 C1299.6,722.0 1322.0,725.6 1330.0,740.0 C1338.0,754.4 1344.8,804.0 1340.0,820.0 C1335.2,836.0 1311.2,844.8 1300.0,840.0 C1288.8,835.2 1271.6,807.6 1270.0,790.0 C1268.4,772.4 1280.4,738.0 1290.0,730.0 Z" fill="#fff400" fill-opacity="0.6" filter="url(#bl3)"/>
<path d="M1160.0,860.0 C1169.6,853.6 1192.0,867.2 1200.0,880.0 C1208.0,892.8 1214.8,927.2 1210.0,940.0 C1205.2,952.8 1181.2,963.2 1170.0,960.0 C1158.8,956.8 1141.6,936.0 1140.0,920.0 C1138.4,904.0 1150.4,866.4 1160.0,860.0 Z" fill="#fff400" fill-opacity="0.6" filter="url(#bl3)"/>
<path d="M1100.0,1000.0 C1106.4,995.2 1123.6,1002.0 1130.0,1010.0 C1136.4,1018.0 1143.2,1040.4 1140.0,1050.0 C1136.8,1059.6 1118.0,1071.6 1110.0,1070.0 C1102.0,1068.4 1091.6,1051.2 1090.0,1040.0 C1088.4,1028.8 1093.6,1004.8 1100.0,1000.0 Z" fill="#fff400" fill-opacity="0.5" filter="url(#bl3)"/>
<path d="M1338.0,230.0 C1337.2,224.4 1346.8,219.0 1353.0,215.0 C1359.2,211.0 1364.2,212.7 1377.0,205.0 C1389.8,197.3 1418.6,177.9 1433.0,167.0 C1447.4,156.1 1457.9,142.6 1467.0,137.0 C1476.1,131.4 1483.9,129.6 1490.0,132.0 C1496.1,134.4 1507.9,145.9 1505.0,152.0 C1502.1,158.1 1482.4,163.1 1472.0,170.0 C1461.6,176.9 1453.9,185.1 1440.0,195.0 C1426.1,204.9 1398.1,223.2 1385.0,232.0 C1371.9,240.8 1365.5,250.3 1358.0,250.0 C1350.5,249.7 1338.8,235.6 1338.0,230.0 Z" fill="#2a2000" fill-opacity="0.3" filter="url(#bl)"/>
<path d="M1173.0,340.0 C1176.5,332.3 1192.9,328.7 1210.0,317.0 C1227.1,305.3 1264.3,279.0 1280.0,267.0 C1295.7,255.0 1300.8,241.8 1308.0,242.0 C1315.2,242.2 1327.6,259.8 1325.0,268.0 C1322.4,276.2 1308.5,281.0 1292.0,293.0 C1275.5,305.0 1238.6,331.5 1222.0,343.0 C1205.4,354.5 1195.8,365.5 1188.0,365.0 C1180.2,364.5 1169.5,347.7 1173.0,340.0 Z" fill="#2a2000" fill-opacity="0.3" filter="url(#bl)"/>
<path d="M993.0,470.0 C998.0,462.5 1018.6,459.1 1033.0,450.0 C1047.4,440.9 1068.6,426.3 1083.0,413.0 C1097.4,399.7 1113.4,374.7 1123.0,367.0 C1132.6,359.3 1138.4,361.0 1143.0,365.0 C1147.6,369.0 1158.6,381.3 1152.0,392.0 C1145.4,402.7 1118.8,419.2 1102.0,432.0 C1085.2,444.8 1063.0,461.6 1047.0,472.0 C1031.0,482.4 1010.6,497.3 1002.0,497.0 C993.4,496.7 988.0,477.5 993.0,470.0 Z" fill="#2a2000" fill-opacity="0.3" filter="url(#bl)"/>
<path d="M825.0,663.0 C827.1,651.5 848.0,626.5 860.0,610.0 C872.0,593.5 888.3,574.4 900.0,560.0 C911.7,545.6 923.9,522.9 933.0,520.0 C942.1,517.1 958.8,531.3 957.0,542.0 C955.2,552.7 934.0,571.8 922.0,587.0 C910.0,602.2 894.0,621.8 882.0,637.0 C870.0,652.2 856.1,677.8 847.0,682.0 C837.9,686.2 822.9,674.5 825.0,663.0 Z" fill="#2a2000" fill-opacity="0.3" filter="url(#bl)"/>
<path d="M1340.0,226.0 C1335.7,231.1 1338.8,244.6 1343.0,254.0 C1347.2,263.4 1358.6,275.7 1366.0,285.0 C1373.4,294.3 1381.6,304.0 1389.0,312.0 C1396.4,320.0 1404.8,327.2 1412.0,335.0 C1419.2,342.8 1428.4,354.9 1434.0,361.0 C1439.6,367.1 1441.2,373.2 1447.0,373.0 C1452.8,372.8 1465.0,365.3 1470.0,360.0 C1475.0,354.7 1479.6,347.7 1478.0,340.0 C1476.4,332.3 1465.3,319.7 1460.0,312.0 C1454.7,304.3 1450.1,299.0 1445.0,292.0 C1439.9,285.0 1435.2,275.0 1428.0,268.0 C1420.8,261.0 1409.3,255.4 1400.0,248.0 C1390.7,240.6 1379.6,225.5 1370.0,222.0 C1360.4,218.5 1344.3,220.9 1340.0,226.0 Z" fill="#231a00" fill-opacity="0.72" filter="url(#bl2)"/>
<path d="M1490.0,130.0 C1491.4,133.8 1512.9,136.4 1522.0,142.0 C1531.1,147.6 1540.3,157.0 1547.0,165.0 C1553.7,173.0 1558.1,182.2 1564.0,192.0 C1569.9,201.8 1576.5,215.8 1584.0,226.0 C1591.5,236.2 1604.3,251.5 1611.0,256.0 C1617.7,260.5 1624.1,256.1 1626.0,254.0 C1627.9,251.9 1625.4,249.1 1623.0,243.0 C1620.6,236.9 1615.2,223.5 1611.0,216.0 C1606.8,208.5 1601.3,203.0 1597.0,196.0 C1592.7,189.0 1588.8,179.4 1584.0,172.0 C1579.2,164.6 1573.4,156.2 1567.0,150.0 C1560.6,143.8 1552.6,138.1 1544.0,133.0 C1535.4,127.9 1521.6,118.5 1513.0,118.0 C1504.4,117.5 1488.6,126.2 1490.0,130.0 Z" fill="#231a00" fill-opacity="0.72" filter="url(#bl2)"/>
<path d="M1172.0,335.0 C1172.0,340.1 1173.9,346.6 1180.0,357.0 C1186.1,367.4 1199.8,388.3 1210.0,400.0 C1220.2,411.7 1235.2,421.4 1244.0,430.0 C1252.8,438.6 1257.3,444.4 1265.0,454.0 C1272.7,463.6 1284.8,485.8 1292.0,490.0 C1299.2,494.2 1311.9,488.0 1310.0,480.0 C1308.1,472.0 1289.6,452.0 1280.0,440.0 C1270.4,428.0 1259.6,416.2 1250.0,405.0 C1240.4,393.8 1228.8,381.2 1220.0,370.0 C1211.2,358.8 1201.4,342.2 1195.0,335.0 C1188.6,327.8 1183.7,325.0 1180.0,325.0 C1176.3,325.0 1172.0,329.9 1172.0,335.0 Z" fill="#2a2000" fill-opacity="0.4" filter="url(#bl)"/>
<path d="M933.0,518.0 C938.9,517.7 953.6,524.2 967.0,533.0 C980.4,541.8 1001.0,561.2 1017.0,573.0 C1033.0,584.8 1054.2,598.7 1067.0,607.0 C1079.8,615.3 1093.3,618.1 1097.0,625.0 C1100.7,631.9 1097.5,649.2 1090.0,650.0 C1082.5,650.8 1064.4,638.8 1050.0,630.0 C1035.6,621.2 1015.2,606.2 1000.0,595.0 C984.8,583.8 966.2,569.6 955.0,560.0 C943.8,550.4 933.5,541.7 930.0,535.0 C926.5,528.3 927.1,518.3 933.0,518.0 Z" fill="#2a2000" fill-opacity="0.4" filter="url(#bl)"/>
<path d="M777.0,721.0 C781.8,717.3 795.6,721.2 810.0,725.0 C824.4,728.8 847.3,738.6 867.0,745.0 C886.7,751.4 917.0,759.9 933.0,765.0 C949.0,770.1 961.9,771.4 967.0,777.0 C972.1,782.6 970.9,796.6 965.0,800.0 C959.1,803.4 946.8,801.5 930.0,798.0 C913.2,794.5 880.8,784.9 860.0,778.0 C839.2,771.1 812.8,759.8 800.0,755.0 C787.2,750.2 783.7,753.4 780.0,748.0 C776.3,742.6 772.2,724.7 777.0,721.0 Z" fill="#2a2000" fill-opacity="0.5" filter="url(#bl)"/>
<path d="M1420.0,520.0 C1432.8,520.8 1461.3,539.1 1480.0,545.0 C1498.7,550.9 1530.6,551.7 1537.0,557.0 C1543.4,562.3 1527.5,574.3 1520.0,578.0 C1512.5,581.7 1502.8,582.6 1490.0,580.0 C1477.2,577.4 1454.4,568.4 1440.0,562.0 C1425.6,555.6 1403.2,546.7 1400.0,540.0 C1396.8,533.3 1407.2,519.2 1420.0,520.0 Z" fill="#2a2000" fill-opacity="0.35" filter="url(#bl)"/>
<path d="M1255.0,600.0 C1263.3,601.6 1286.1,630.4 1300.0,640.0 C1313.9,649.6 1337.2,652.8 1342.0,660.0 C1346.8,667.2 1336.7,680.7 1330.0,685.0 C1323.3,689.3 1311.2,691.0 1300.0,687.0 C1288.8,683.0 1268.3,669.1 1260.0,660.0 C1251.7,650.9 1248.8,639.6 1248.0,630.0 C1247.2,620.4 1246.7,598.4 1255.0,600.0 Z" fill="#2a2000" fill-opacity="0.35" filter="url(#bl)"/>
<path d="M1053.0,667.0 C1057.8,661.4 1081.9,671.2 1095.0,680.0 C1108.1,688.8 1124.6,707.4 1135.0,722.0 C1145.4,736.6 1159.0,762.2 1160.0,771.0 C1161.0,779.8 1150.6,780.4 1141.0,777.0 C1131.4,773.6 1112.2,759.9 1100.0,750.0 C1087.8,740.1 1072.5,728.3 1065.0,715.0 C1057.5,701.7 1048.2,672.6 1053.0,667.0 Z" fill="#2a2000" fill-opacity="0.35" filter="url(#bl)"/>
<path d="M952.0,890.0 C954.1,903.3 966.9,926.6 973.0,933.0 C979.1,939.4 985.7,935.3 990.0,930.0 C994.3,924.7 1001.6,911.2 1000.0,900.0 C998.4,888.8 986.4,868.0 980.0,860.0 C973.6,852.0 964.5,845.2 960.0,850.0 C955.5,854.8 949.9,876.7 952.0,890.0 Z" fill="#2a2000" fill-opacity="0.3" filter="url(#bl)"/>
<path d="M765.0,985.0 C770.1,980.7 803.6,982.7 830.0,980.0 C856.4,977.3 908.9,956.8 930.0,968.0 C951.1,979.2 960.4,1029.7 962.0,1050.0 C963.6,1070.3 953.1,1091.0 940.0,1095.0 C926.9,1099.0 897.0,1081.4 880.0,1075.0 C863.0,1068.6 847.1,1065.9 834.0,1055.0 C820.9,1044.1 809.0,1018.2 798.0,1007.0 C787.0,995.8 759.9,989.3 765.0,985.0 Z" fill="#2a2000" fill-opacity="0.12" filter="url(#bl3)"/>
<path d="M940.0,1100.0 C944.3,1088.5 969.0,1071.8 985.0,1075.0 C1001.0,1078.2 1025.6,1100.0 1040.0,1120.0 C1054.4,1140.0 1068.6,1181.6 1075.0,1200.0 C1081.4,1218.4 1089.3,1236.8 1080.0,1235.0 C1070.7,1233.2 1036.5,1203.1 1017.0,1189.0 C997.5,1174.9 970.3,1161.2 958.0,1147.0 C945.7,1132.8 935.7,1111.5 940.0,1100.0 Z" fill="#2a2000" fill-opacity="0.1" filter="url(#bl)"/>
<path d="M758.0,967.0 C762.3,963.2 787.2,956.5 803.0,953.0 C818.8,949.5 841.5,947.1 857.0,945.0 C872.5,942.9 887.7,939.0 900.0,940.0 C912.3,941.0 930.2,946.4 934.0,951.0 C937.8,955.6 931.2,965.2 924.0,969.0 C916.8,972.8 904.0,973.7 889.0,975.0 C874.0,976.3 848.1,976.7 830.0,977.0 C811.9,977.3 787.5,978.6 776.0,977.0 C764.5,975.4 753.7,970.8 758.0,967.0 Z" fill="#231a00" fill-opacity="0.45" filter="url(#bl2)"/>
<path d="M1210.6,618.5 C1212.7,622.0 1222.6,630.6 1223.5,640.6 C1224.4,650.6 1217.2,674.5 1216.0,681.0" fill="none" stroke="#111" stroke-width="1.3" stroke-opacity="0.8" stroke-linecap="round" stroke-linejoin="round"/>
<path d="M1271.0,660.7 C1267.8,671.3 1255.6,710.4 1251.0,726.8 C1246.4,743.2 1243.4,757.6 1242.0,763.5" fill="none" stroke="#111" stroke-width="1.3" stroke-opacity="0.8" stroke-linecap="round" stroke-linejoin="round"/>
<path d="M1124.0,820.0 C1125.3,814.5 1127.8,792.8 1132.0,785.5 C1136.2,778.2 1147.1,776.3 1150.0,774.5" fill="none" stroke="#111" stroke-width="1.3" stroke-opacity="0.8" stroke-linecap="round" stroke-linejoin="round"/>
<path d="M1651.0,391.0 C1654.9,390.2 1670.0,385.5 1675.6,386.0 C1681.2,386.5 1684.0,389.8 1686.0,394.0 C1688.0,398.2 1688.7,406.6 1688.0,412.0 C1687.3,417.4 1685.2,423.3 1681.7,427.5 C1678.2,431.7 1670.6,436.5 1666.4,438.0 C1662.2,439.5 1658.6,437.9 1655.7,436.7 C1652.8,435.5 1649.2,431.6 1648.0,430.6" fill="none" stroke="#111" stroke-width="1.3" stroke-opacity="0.8" stroke-linecap="round" stroke-linejoin="round"/>
<path d="M1632.8,325.0 C1636.2,324.3 1647.2,321.1 1654.0,320.6 C1660.8,320.1 1669.7,319.9 1675.6,322.0 C1681.5,324.1 1686.6,329.4 1691.0,334.0 C1695.4,338.6 1700.1,345.9 1703.0,351.0 C1705.9,356.1 1707.8,361.1 1709.0,366.0 C1710.2,370.9 1709.7,377.2 1710.7,381.7 C1711.7,386.2 1712.8,390.1 1715.0,394.0 C1717.2,397.9 1722.7,402.2 1724.5,406.0 C1726.3,409.8 1726.7,415.0 1726.0,418.0 C1725.3,421.0 1723.2,423.0 1720.0,424.5 C1716.8,426.0 1710.2,426.5 1706.0,427.5 C1701.8,428.5 1695.9,430.1 1694.0,430.6" fill="none" stroke="#111" stroke-width="1.3" stroke-opacity="0.8" stroke-linecap="round" stroke-linejoin="round"/>
<path d="M1680.0,296.0 C1680.0,297.4 1681.2,301.3 1680.0,305.0 C1678.8,308.7 1673.7,316.8 1672.5,319.0" fill="none" stroke="#111" stroke-width="1.3" stroke-opacity="0.8" stroke-linecap="round" stroke-linejoin="round"/>
<path d="M1732.0,331.0 C1730.1,334.2 1723.2,345.4 1720.0,351.0 C1716.8,356.6 1713.5,361.1 1712.0,366.0 C1710.5,370.9 1710.9,379.2 1710.7,381.7" fill="none" stroke="#111" stroke-width="1.3" stroke-opacity="0.8" stroke-linecap="round" stroke-linejoin="round"/>
<path d="M1095.6,676.0 C1098.5,677.6 1108.2,685.2 1114.0,686.0 C1119.8,686.8 1122.2,682.1 1132.0,681.0 C1141.8,679.9 1163.2,678.8 1175.0,679.0 C1186.8,679.2 1198.2,679.9 1205.6,682.5 C1213.0,685.1 1217.6,689.6 1221.0,695.0 C1224.4,700.4 1226.5,706.7 1227.0,716.0 C1227.5,725.3 1227.4,744.7 1224.0,753.0 C1220.6,761.3 1213.4,764.6 1205.6,768.0 C1197.8,771.4 1183.3,773.0 1175.0,774.0 C1166.7,775.0 1159.4,773.5 1154.0,774.0 C1148.6,774.5 1143.1,776.5 1141.0,777.0" fill="none" stroke="#111" stroke-width="1.3" stroke-opacity="0.8" stroke-linecap="round" stroke-linejoin="round"/>
<path d="M1132.0,725.0 C1137.4,724.5 1158.6,720.0 1166.0,722.0 C1173.4,724.0 1176.6,731.6 1178.0,737.5 C1179.4,743.4 1177.9,753.6 1175.0,759.0 C1172.1,764.4 1165.4,768.1 1160.0,771.0 C1154.6,773.9 1144.0,776.0 1141.0,777.0" fill="none" stroke="#111" stroke-width="1.3" stroke-opacity="0.8" stroke-linecap="round" stroke-linejoin="round"/>
<path d="M1001.0,814.0 C1006.8,810.1 1026.3,794.5 1037.5,789.5 C1048.7,784.5 1061.7,781.5 1071.0,783.0 C1080.3,784.5 1089.7,791.6 1095.6,799.0 C1101.5,806.4 1106.0,819.2 1108.0,829.0 C1110.0,838.8 1110.0,851.7 1108.0,860.0 C1106.0,868.3 1101.0,876.7 1095.6,881.0 C1090.2,885.3 1082.3,886.0 1074.0,887.0 C1065.7,888.0 1050.5,884.5 1043.6,887.0 C1036.7,889.5 1033.0,900.0 1031.0,902.5" fill="none" stroke="#111" stroke-width="1.3" stroke-opacity="0.8" stroke-linecap="round" stroke-linejoin="round"/>
<path d="M1114.0,850.6 C1114.0,854.5 1116.5,867.2 1114.0,875.0 C1111.5,882.8 1106.4,894.1 1098.6,899.5 C1090.8,904.9 1074.3,907.6 1065.0,908.6 C1055.7,909.6 1044.5,906.1 1040.6,905.6" fill="none" stroke="#111" stroke-width="1.3" stroke-opacity="0.8" stroke-linecap="round" stroke-linejoin="round"/>
<path d="M970.0,814.0 C973.5,820.8 986.3,848.4 991.7,856.7 C997.1,865.0 1002.0,860.7 1004.0,866.0 C1006.0,871.3 1006.0,883.7 1004.0,890.0 C1002.0,896.3 994.2,899.2 991.7,905.6 C989.2,912.0 991.6,925.6 988.6,930.0 C985.6,934.4 977.4,935.4 973.0,933.0 C968.6,930.6 964.4,921.9 961.0,915.0 C957.6,908.1 953.4,894.0 952.0,890.0" fill="none" stroke="#111" stroke-width="1.3" stroke-opacity="0.8" stroke-linecap="round" stroke-linejoin="round"/>
<path d="M1451.7,427.5 C1453.7,429.5 1458.2,437.5 1464.0,440.0 C1469.8,442.5 1479.7,442.5 1488.0,443.0 C1496.3,443.5 1507.7,441.1 1516.0,443.0 C1524.3,444.9 1533.7,450.7 1540.0,455.0 C1546.3,459.3 1552.1,464.1 1555.6,470.0 C1559.1,475.9 1559.2,485.6 1561.7,492.0 C1564.2,498.4 1569.0,503.8 1571.0,510.0 C1573.0,516.2 1574.5,525.1 1574.0,531.0 C1573.5,536.9 1573.0,543.5 1568.0,547.0 C1563.0,550.5 1547.0,552.0 1543.0,553.0" fill="none" stroke="#111" stroke-width="1.3" stroke-opacity="0.8" stroke-linecap="round" stroke-linejoin="round"/>
<path d="M1525.0,525.0 C1526.9,527.0 1535.1,532.1 1537.0,537.5 C1538.9,542.9 1539.9,552.7 1537.0,559.0 C1534.1,565.3 1525.9,573.6 1519.0,577.0 C1512.1,580.4 1499.9,581.0 1494.0,580.0 C1488.1,579.0 1486.8,574.4 1482.0,571.0 C1477.2,567.6 1469.8,562.4 1464.0,559.0 C1458.2,555.6 1448.5,551.4 1445.6,550.0" fill="none" stroke="#111" stroke-width="1.3" stroke-opacity="0.8" stroke-linecap="round" stroke-linejoin="round"/>
<path d="M1265.0,547.0 C1269.0,548.4 1280.2,555.0 1290.0,556.0 C1299.8,557.0 1318.2,552.5 1326.0,553.0 C1333.8,553.5 1332.6,557.1 1339.0,559.0 C1345.4,560.9 1358.7,561.2 1366.0,565.0 C1373.3,568.8 1380.6,576.1 1384.5,583.0 C1388.4,589.9 1388.1,602.1 1390.6,608.0 C1393.1,613.9 1398.5,614.2 1400.0,620.0 C1401.5,625.8 1402.5,638.6 1400.0,644.5 C1397.5,650.4 1391.4,654.0 1384.5,657.0 C1377.6,660.0 1361.4,662.0 1357.0,663.0" fill="none" stroke="#111" stroke-width="1.3" stroke-opacity="0.8" stroke-linecap="round" stroke-linejoin="round"/>
<path d="M1342.0,638.0 C1343.9,640.0 1352.6,645.6 1354.0,650.6 C1355.4,655.6 1354.9,663.7 1351.0,669.0 C1347.1,674.3 1335.9,681.1 1329.5,684.0 C1323.1,686.9 1315.4,687.5 1311.0,687.0 C1306.6,686.5 1303.4,682.0 1302.0,681.0" fill="none" stroke="#111" stroke-width="1.3" stroke-opacity="0.8" stroke-linecap="round" stroke-linejoin="round"/>
<path d="M1568.0,470.0 C1570.9,465.2 1579.8,447.3 1586.0,440.0 C1592.2,432.7 1603.6,427.0 1607.0,424.5" fill="none" stroke="#111" stroke-width="1.3" stroke-opacity="0.8" stroke-linecap="round" stroke-linejoin="round"/>
<path d="M1403.0,614.0 C1405.9,607.1 1414.2,580.8 1421.0,571.0 C1427.8,561.2 1441.7,555.9 1445.6,553.0" fill="none" stroke="#111" stroke-width="1.3" stroke-opacity="0.8" stroke-linecap="round" stroke-linejoin="round"/>
<path d="M934.5,967.0 C937.5,967.0 947.0,964.9 953.0,967.0 C959.0,969.1 967.7,974.9 972.0,980.0 C976.3,985.1 978.3,993.9 980.0,999.0 C981.7,1004.1 982.6,1007.4 982.6,1012.0 C982.6,1016.6 981.7,1021.9 980.0,1028.0 C978.3,1034.1 974.1,1044.9 972.0,1050.0 C969.9,1055.1 967.9,1054.9 966.6,1060.0 C965.3,1065.1 966.2,1076.8 964.0,1082.0 C961.8,1087.2 954.8,1090.8 953.0,1092.5" fill="none" stroke="#111" stroke-width="1.3" stroke-opacity="0.8" stroke-linecap="round" stroke-linejoin="round"/>
<path d="M841.0,1066.0 C844.4,1065.7 852.6,1064.0 862.0,1064.4 C871.4,1064.8 890.6,1065.6 900.0,1068.4 C909.4,1071.2 915.1,1077.7 921.0,1082.0 C926.9,1086.3 934.0,1089.9 937.0,1095.0 C940.0,1100.1 940.8,1107.6 940.0,1114.0 C939.2,1120.4 933.3,1131.6 932.0,1135.0" fill="none" stroke="#111" stroke-width="1.3" stroke-opacity="0.8" stroke-linecap="round" stroke-linejoin="round"/>
<path d="M990.6,910.7 C993.2,911.1 1002.0,909.5 1006.7,913.4 C1011.4,917.3 1017.0,926.3 1020.0,934.8 C1023.0,943.3 1025.0,957.4 1025.4,966.8 C1025.8,976.2 1025.7,985.5 1022.7,993.6 C1019.7,1001.7 1012.7,1012.5 1006.7,1017.6 C1000.7,1022.7 988.5,1024.4 985.0,1025.7" fill="none" stroke="#111" stroke-width="1.3" stroke-opacity="0.8" stroke-linecap="round" stroke-linejoin="round"/>
<path d="M1028.0,940.0 C1029.7,943.4 1037.1,952.9 1038.8,961.5 C1040.5,970.1 1040.5,984.6 1038.8,993.6 C1037.1,1002.6 1033.1,1010.3 1028.0,1017.6 C1022.9,1024.9 1012.7,1034.3 1006.7,1039.0 C1000.7,1043.7 993.2,1045.7 990.6,1047.0" fill="none" stroke="#111" stroke-width="1.3" stroke-opacity="0.8" stroke-linecap="round" stroke-linejoin="round"/>
<path d="M1033.0,1098.0 C1034.8,1097.1 1039.2,1092.5 1044.0,1092.5 C1048.8,1092.5 1057.9,1094.6 1063.0,1098.0 C1068.1,1101.4 1073.4,1108.1 1076.0,1114.0 C1078.6,1119.9 1080.7,1129.9 1079.0,1135.0 C1077.3,1140.1 1067.7,1144.2 1065.5,1146.0" fill="none" stroke="#111" stroke-width="1.3" stroke-opacity="0.8" stroke-linecap="round" stroke-linejoin="round"/>
<path d="M1017.0,1146.0 C1018.8,1147.3 1023.7,1151.4 1028.0,1154.0 C1032.3,1156.6 1039.3,1158.6 1044.0,1162.0 C1048.7,1165.4 1055.3,1173.3 1057.5,1175.4" fill="none" stroke="#111" stroke-width="1.3" stroke-opacity="0.8" stroke-linecap="round" stroke-linejoin="round"/>
</g>
 </svg>

 <svg style="position:absolute;left:0;top:0" width="700" height="1309" viewBox="0 0 700 1309">
  <circle cx="552.6" cy="1200.4" r="10.8" fill="#2cb43c"/>
  <circle cx="557.5" cy="1263.6" r="12" fill="#0066dd"/>
  <line x1="589.4" y1="1218.6" x2="614.4" y2="1195.3" stroke="#0a7aff" stroke-width="2.5"/>
  <circle cx="614.4" cy="1195.3" r="10.8" fill="#0a7aff"/>
  <circle cx="584.8" cy="1236.8" r="9.1" fill="#dd3228"/>
  <line x1="589" y1="1234" x2="621.8" y2="1257.3" stroke="#2bc93f" stroke-width="2.5"/>
  <circle cx="621.8" cy="1257.3" r="11.4" fill="#2bc93f"/>
  <circle cx="589.4" cy="1218.6" r="13.7" fill="#ff3b30"/>
  <text x="589.4" y="1224.5" font-family="Liberation Sans" font-size="14" font-weight="bold" text-anchor="middle" fill="#111">X</text>
  <text x="614.6" y="1200.5" font-family="Liberation Sans" font-size="12" font-weight="bold" text-anchor="middle" fill="#111">Z</text>
  <text x="622" y="1262.8" font-family="Liberation Sans" font-size="12" font-weight="bold" text-anchor="middle" fill="#111">Y</text>
 </svg>
 <div class="t" style="left:533px;top:72.9px;font-size:19px;color:#fff">Surface Area:</div>
 <div class="t" style="left:662px;top:72.9px;font-size:19px;color:#fff">125491 mm<sup style="font-size:11px;vertical-align:7px">2</sup></div>
 <div class="t" style="left:533px;top:105.9px;font-size:19px;color:#fff">Volume:</div>
 <div class="t" style="left:662px;top:105.9px;font-size:19px;color:#fff">169590 mm<sup style="font-size:11px;vertical-align:7px">3</sup></div>
</div>
</body></html>
